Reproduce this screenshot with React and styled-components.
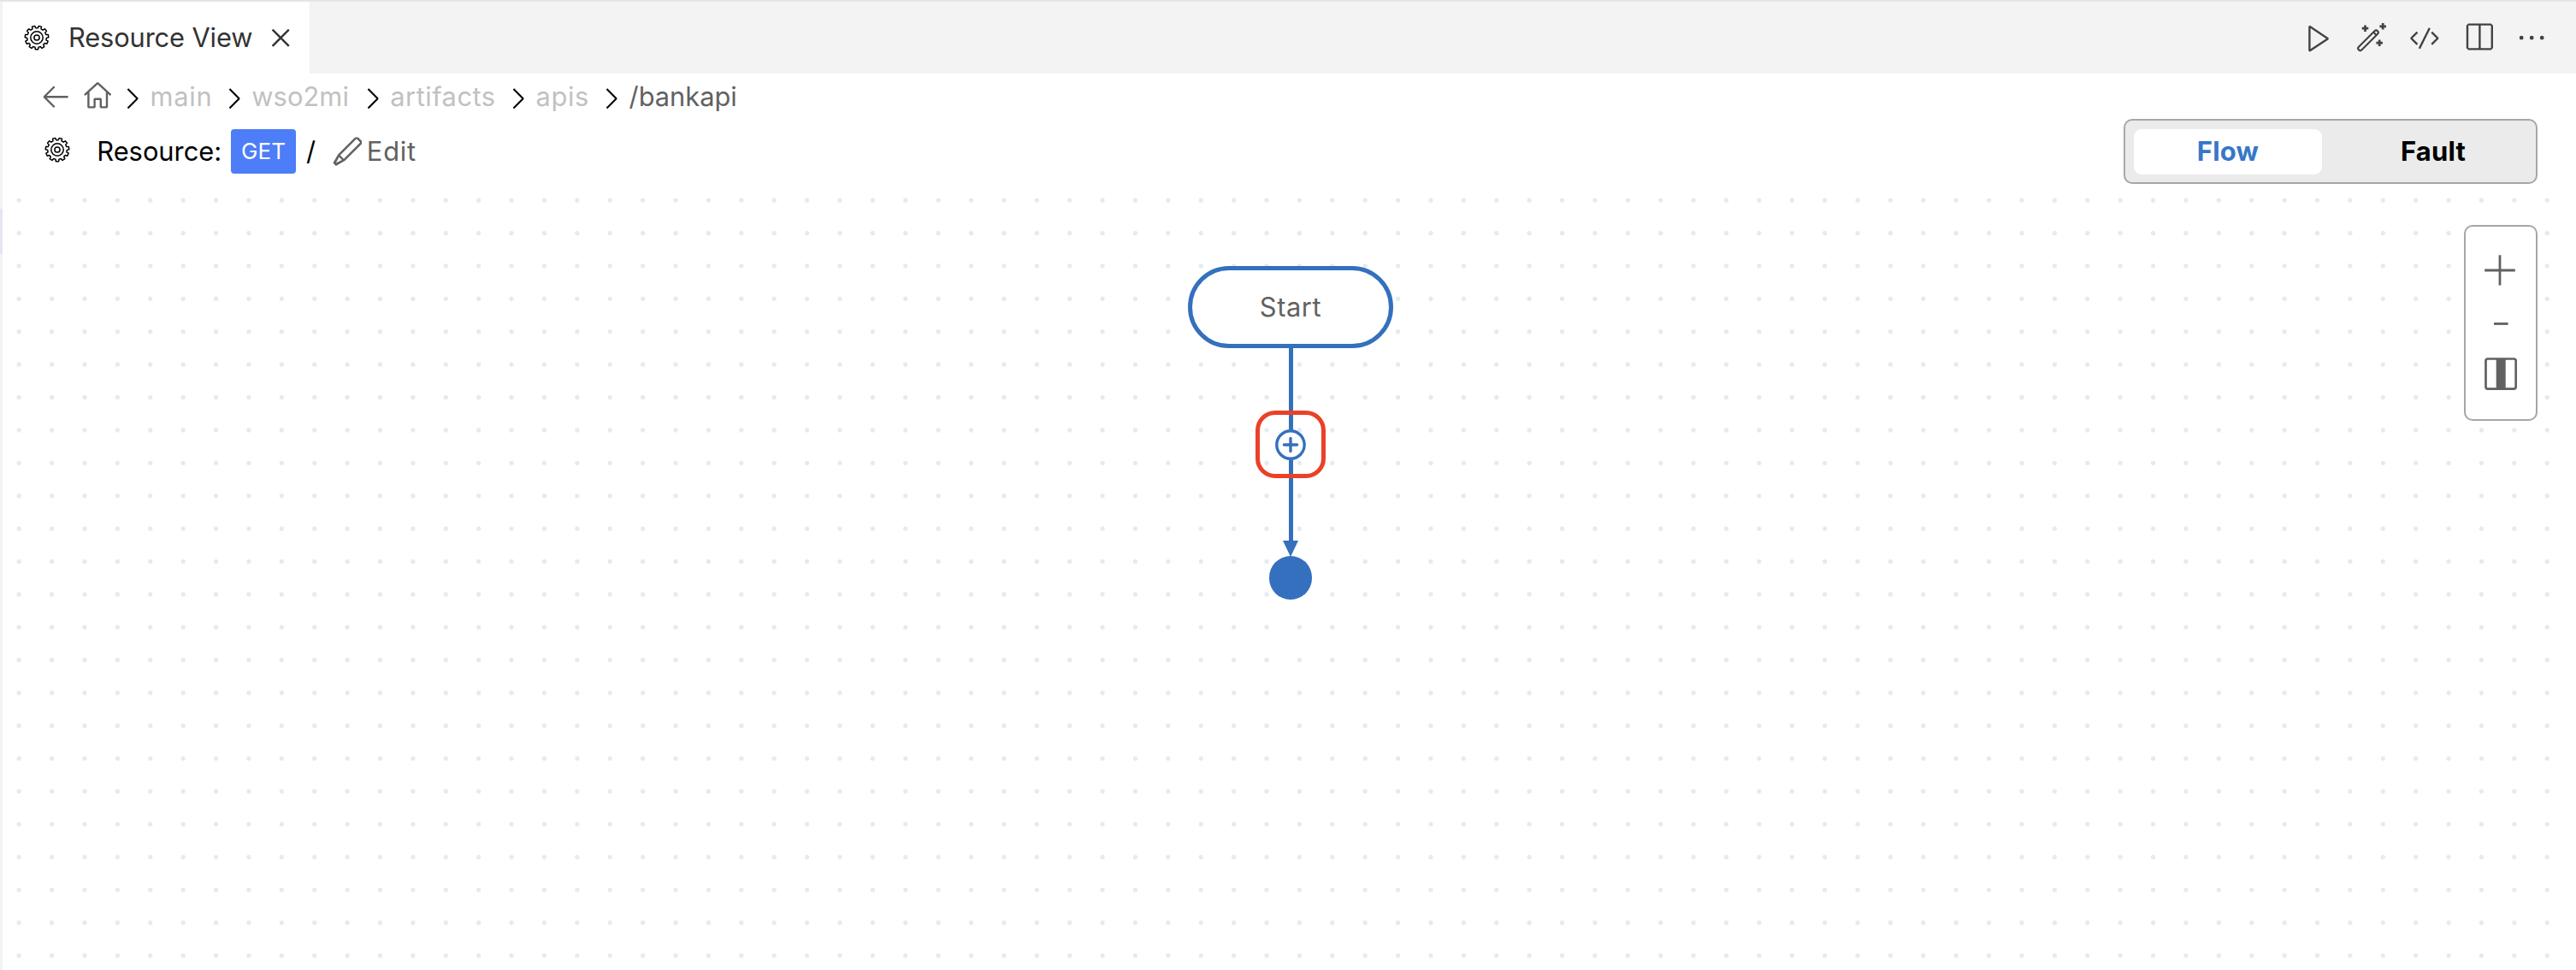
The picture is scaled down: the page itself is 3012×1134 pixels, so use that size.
import React from "react";
import styled, { createGlobalStyle } from "styled-components";
import {
  VscPlay,
  VscCode,
  VscSplitHorizontal,
  VscEllipsis,
  VscArrowLeft,
  VscHome,
  VscChevronRight,
  VscClose,
  VscEdit,
} from "react-icons/vsc";

const GlobalStyle = createGlobalStyle`
  * { box-sizing: border-box; }
  body {
    margin: 0;
    background: #ffffff;
    font-family: Inter, "Liberation Sans", sans-serif;
    font-size: 30.8px;
    line-height: 36px;
    color: #616161;
    overflow: hidden;
  }
  svg { display: block; flex: none; }
`;

const BLUE = "#3470bd";

const Window = styled.div`
  display: flex;
  height: 1134px;
  border-top: 2px solid #e5e5e5;
`;

const SideStrip = styled.div`
  flex: none;
  width: 3px;
  padding-top: 242px;
  background: #f3f3f3;
`;

const SideMarker = styled.div`
  height: 53px;
  background: #e4e6f1;
`;

const Main = styled.div`
  flex: 1;
  min-width: 0;
  display: flex;
  flex-direction: column;
`;

const TabBar = styled.div`
  flex: none;
  display: flex;
  justify-content: space-between;
  height: 84px;
  background: #f3f3f3;
`;

const Tab = styled.div`
  display: flex;
  align-items: center;
  width: 359px;
  padding-left: 25px;
  background: #ffffff;
  color: #333333;
`;

const Text = styled.span`
  flex: none;
  width: ${(p) => (p.$width ? `${p.$width}px` : "auto")};
  white-space: pre;
  letter-spacing: ${(p) => p.$spacing || 0}px;
`;

const TabTitle = styled(Text)`
  margin-left: 22px;
`;

const EditorActions = styled.div`
  display: flex;
  align-items: center;
  gap: 24px;
  padding-right: 32.4px;
  font-size: 38.4px;
  color: #424242;
`;

const Breadcrumbs = styled.nav`
  flex: none;
  display: flex;
  align-items: center;
  height: 53px;
  padding: 1px 0 0 42.7px;
`;

const NavIcon = styled.span`
  width: ${(p) => p.$width}px;
  margin-top: -2px;
  font-size: 38.4px;
`;

const Crumb = styled.div`
  display: flex;
  align-items: center;
  gap: 1.8px;
  width: ${(p) => (p.$width ? `${p.$width}px` : "auto")};
  color: ${(p) => (p.$current ? "#616161" : "#c1c1c1")};
`;

const Separator = styled.span`
  padding-top: 5px;
  font-size: 38.4px;
  color: #000000;
`;

const Header = styled.div`
  flex: none;
  display: flex;
  align-items: center;
  justify-content: space-between;
  height: 76px;
  padding: 0 45px 0 49px;
`;

const Resource = styled.div`
  display: flex;
  align-items: center;
  color: #000000;
`;

const GearSlot = styled.span`
  width: 61.3px;
  margin-top: -5px;
`;

const Method = styled.span`
  display: flex;
  align-items: center;
  justify-content: center;
  width: 76px;
  height: 52px;
  border-radius: 4px;
  background: #4d7df8;
  color: #ffffff;
  font-size: 26px;
  letter-spacing: 0.1px;
`;

const Path = styled(Text)`
  margin-left: 12px;
`;

const EditButton = styled.button`
  display: flex;
  align-items: center;
  gap: 3.8px;
  margin: 0;
  padding: 0;
  border: 0;
  background: none;
  font: inherit;
  color: #616161;
`;

const EditGlyph = styled(VscEdit)`
  width: 38.4px;
  height: 38.4px;
`;

const Toggle = styled.div`
  display: flex;
  align-items: center;
  justify-content: space-between;
  width: 484px;
  height: 76px;
  padding: 0 10px;
  border: 2px solid #a6a6a6;
  border-radius: 10px;
  background: #ebebeb;
`;

const Segment = styled.div`
  display: flex;
  align-items: center;
  justify-content: center;
  width: 220px;
  height: 53px;
  border-radius: 9px;
  background: ${(p) => (p.$active ? "#ffffff" : "transparent")};
  color: ${(p) => (p.$active ? "#3677c8" : "#000000")};
  font-size: 31px;
  font-weight: 700;
  letter-spacing: 0.2px;
`;

const Canvas = styled.div`
  position: relative;
  flex: 1;
  padding: 96px 0 0 3px;
`;

const DotGrid = styled.svg`
  position: absolute;
  inset: 0;
  width: 100%;
  height: 100%;
`;

const Flow = styled.div`
  position: relative;
  display: flex;
  flex-direction: column;
  align-items: center;
`;

const StartNode = styled.div`
  display: flex;
  align-items: center;
  justify-content: center;
  width: 240px;
  height: 96px;
  border: 5px solid ${BLUE};
  border-radius: 48px;
  background: #ffffff;
  letter-spacing: 0.6px;
`;

const Link = styled.div`
  width: 5px;
  height: 94.7px;
  background: ${BLUE};
`;

const AddNode = styled.div`
  position: relative;
  width: 36px;
  height: 36px;
`;

const Highlight = styled.div`
  position: absolute;
  top: -22px;
  left: -23px;
  width: 82px;
  height: 79px;
  border: 5px solid #ea4127;
  border-radius: 23px;
`;

const ArrowHead = styled.div`
  width: 0;
  height: 0;
  margin-bottom: -1px;
  border-top: 19px solid ${BLUE};
  border-left: 9.6px solid transparent;
  border-right: 9.6px solid transparent;
`;

const EndNode = styled.div`
  width: 50.4px;
  height: 50.4px;
  border-radius: 50%;
  background: ${BLUE};
`;

const ZoomPanel = styled.div`
  position: absolute;
  top: 48px;
  right: 45px;
  display: flex;
  flex-direction: column;
  align-items: center;
  width: 86px;
  height: 229px;
  padding-top: 32px;
  border: 2px solid #a6a6a6;
  border-radius: 10px;
  background: #ffffff;
`;

const ZoomButton = styled.span`
  margin-bottom: ${(p) => p.$after || 0}px;
`;

const TEETH = 11;

function gearOutline(cx, cy, root, tip) {
  const points = [];
  const step = (Math.PI * 2) / TEETH;
  for (let i = 0; i < TEETH; i += 1) {
    const mid = Math.PI / 2 + i * step;
    [
      [-0.31, root],
      [-0.21, tip],
      [0.21, tip],
      [0.31, root],
    ].forEach(([k, r]) => {
      const a = mid + k * step;
      points.push(`${(cx + r * Math.cos(a)).toFixed(2)},${(cy + r * Math.sin(a)).toFixed(2)}`);
    });
  }
  return points.join(" ");
}

function Gear() {
  return (
    <svg width="30" height="30" viewBox="0 0 30 30" fill="none" stroke="#000000" strokeWidth="1.5">
      <polygon points={gearOutline(15, 15, 11.3, 13.8)} strokeLinejoin="round" />
      <circle cx="15" cy="15" r="7.2" />
      <circle cx="15" cy="15" r="3.1" />
    </svg>
  );
}

function Wand() {
  return (
    <svg width="38.4" height="38.4" viewBox="0 0 38.4 38.4" fill="none" stroke="currentColor">
      <g transform="rotate(-45 15 22.3)" strokeWidth="2.1">
        <rect x="-0.6" y="19.8" width="31.2" height="5" rx="2.5" />
        <path d="M26.2 19.8v5" />
      </g>
      <path
        d="M11.5 4.4v7.6M7.7 8.2h7.6M32.2 2v7.6M28.4 5.8h7.6M28.2 21.4v7.6M24.4 25.2h7.6"
        strokeWidth="2.7"
      />
    </svg>
  );
}

const crumbs = [
  { label: "main", width: 118.9, spacing: 0.8 },
  { label: "wso2mi", width: 162, spacing: 0.1 },
  { label: "artifacts", width: 170.3, spacing: 0.5 },
  { label: "apis", width: 109, spacing: 0.6 },
  { label: "/bankapi", spacing: 0, current: true },
];

export default function App() {
  return (
    <>
      <GlobalStyle />
      <Window>
        <SideStrip>
          <SideMarker />
        </SideStrip>
        <Main>
          <TabBar>
            <Tab>
              <Gear />
              <TabTitle $width={229.2} $spacing={-0.12}>Resource View</TabTitle>
              <VscClose size={38.4} />
            </Tab>
            <EditorActions>
              <VscPlay />
              <Wand />
              <VscCode />
              <VscSplitHorizontal />
              <VscEllipsis />
            </EditorActions>
          </TabBar>

          <Breadcrumbs>
            <NavIcon $width={49}>
              <VscArrowLeft />
            </NavIcon>
            <NavIcon $width={40.5}>
              <VscHome />
            </NavIcon>
            {crumbs.map((c) => (
              <Crumb key={c.label} $width={c.width} $current={c.current}>
                <Separator>
                  <VscChevronRight />
                </Separator>
                <Text $spacing={c.spacing}>{c.label}</Text>
              </Crumb>
            ))}
          </Breadcrumbs>

          <Header>
            <Resource>
              <GearSlot>
                <Gear />
              </GearSlot>
              <Text $width={156.7} $spacing={0}>Resource:</Text>
              <Method>GET</Method>
              <Path $width={28.7}>/</Path>
              <EditButton>
                <EditGlyph />
                <Text $spacing={0.8}>Edit</Text>
              </EditButton>
            </Resource>
            <Toggle>
              <Segment $active>Flow</Segment>
              <Segment>Fault</Segment>
            </Toggle>
          </Header>

          <Canvas>
            <DotGrid>
              <defs>
                <pattern id="dots" width="38.39" height="38.39" patternUnits="userSpaceOnUse">
                  <circle cx="19.2" cy="19.2" r="2.6" fill="#e5eaf0" />
                </pattern>
              </defs>
              <rect width="100%" height="100%" fill="url(#dots)" />
            </DotGrid>
            <Flow>
              <StartNode>Start</StartNode>
              <Link />
              <AddNode>
                <svg width="36" height="36" viewBox="0 0 36 36" fill="none" stroke={BLUE} strokeWidth="3.4">
                  <circle cx="18" cy="18" r="16.2" fill="#ffffff" />
                  <path d="M18 10.4v15.2M10.4 18h15.2" strokeLinecap="round" />
                </svg>
                <Highlight />
              </AddNode>
              <Link />
              <ArrowHead />
              <EndNode />
            </Flow>
            <ZoomPanel>
              <ZoomButton $after={41}>
                <svg width="38" height="38" viewBox="0 0 38 38" stroke="#616161" strokeWidth="2.8">
                  <path d="M0.2 19h35.6M18 1.2v35.2" />
                </svg>
              </ZoomButton>
              <ZoomButton $after={37}>
                <svg width="38" height="5" viewBox="0 0 38 5" stroke="#616161" strokeWidth="2.8">
                  <path d="M11 2.5h16.6" />
                </svg>
              </ZoomButton>
              <ZoomButton>
                <svg width="38" height="38" viewBox="0 0 38 38" fill="none" stroke="#616161" strokeWidth="2.7">
                  <rect x="1.5" y="1.5" width="35.2" height="35.2" rx="2.4" />
                  <path d="M19.2 1.4v35.4" strokeWidth="11" />
                </svg>
              </ZoomButton>
            </ZoomPanel>
          </Canvas>
        </Main>
      </Window>
    </>
  );
}
